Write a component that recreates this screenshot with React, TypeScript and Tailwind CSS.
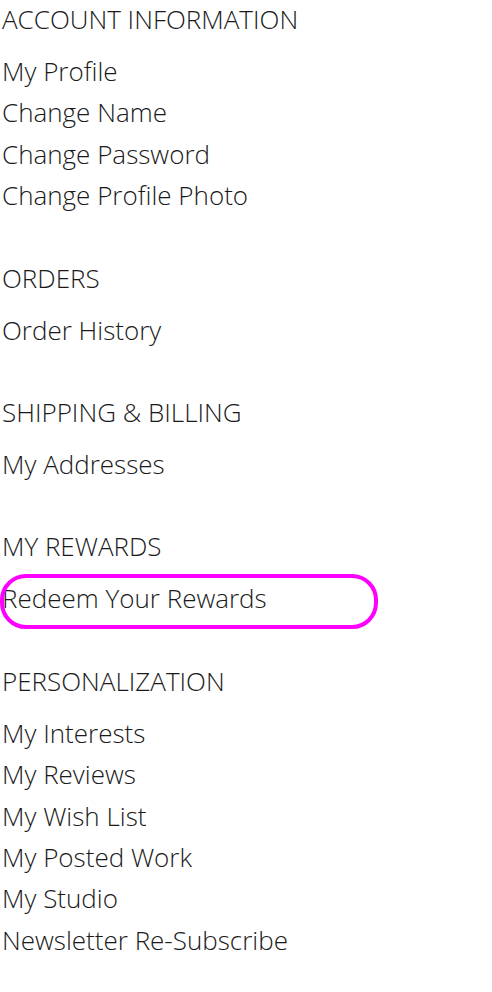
const sections = [
  {
    title: "ACCOUNT INFORMATION",
    links: ["My Profile", "Change Name", "Change Password", "Change Profile Photo"],
  },
  { title: "ORDERS", links: ["Order History"] },
  { title: "SHIPPING & BILLING", links: ["My Addresses"] },
  { title: "MY REWARDS", links: ["Redeem Your Rewards"] },
  {
    title: "PERSONALIZATION",
    links: ["My Interests", "My Reviews", "My Wish List", "My Posted Work", "My Studio", "Newsletter Re-Subscribe"],
  },
];

export default function App() {
  return (
    <div className="min-h-[992px] w-[492px] bg-white pl-[2px] font-['Open_Sans',sans-serif] font-light text-[#1a1a1a]">
      {sections.map((s, i) => (
        <div key={s.title} className={i > 0 ? "mt-[42px]" : ""}>
          <h3 className="text-[26px] font-light leading-[38px]">{s.title}</h3>
          <ul className="mt-[13px]">
            {s.links.map((l) => (
              <li key={l} className="relative text-[26px] leading-[41.4px]">
                <a href="#">{l}</a>
                {l === "Redeem Your Rewards" && (
                  <span className="pointer-events-none absolute left-[-2px] top-[-4px] h-[55px] w-[378px] rounded-[26px] border-4 border-[#ff00ff]" />
                )}
              </li>
            ))}
          </ul>
        </div>
      ))}
    </div>
  );
}
